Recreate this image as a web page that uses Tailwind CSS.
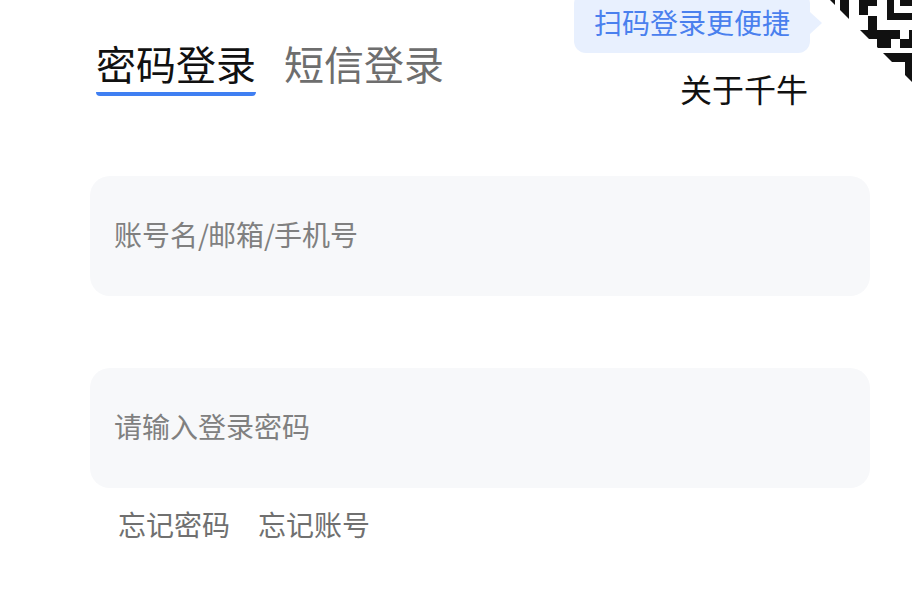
<!DOCTYPE html>
<html lang="zh">
<head>
    <meta charset="UTF-8">
    <title>登录</title>
    <script src="https://cdn.jsdelivr.net/npm/@tailwindcss/browser@4"></script>
</head>
<body class="bg-white">
    <div class="relative w-[912px] h-[600px] overflow-hidden bg-white font-['Noto_Sans_CJK_SC',sans-serif]">
        <!-- 二维码角标 -->
        <svg class="absolute top-0 right-0" width="90" height="90" viewBox="822 0 90 90">
            <defs>
                <clipPath id="corner">
                    <polygon points="830,0 912,0 912,82" />
                </clipPath>
            </defs>
            <g fill="#111" clip-path="url(#corner)">
                <rect x="826" y="0" width="9" height="6" />
                <rect x="840" y="0" width="9" height="20" />
                <rect x="859" y="0" width="18" height="6" />
                <rect x="859" y="6" width="9" height="9" />
                <rect x="887" y="0" width="7" height="20" />
                <rect x="894" y="13" width="18" height="7" />
                <rect x="900" y="0" width="12" height="6" />
                <rect x="868" y="16" width="9" height="14" />
                <rect x="855" y="30" width="45" height="9" />
                <rect x="877" y="39" width="14" height="9" />
                <rect x="909" y="30" width="3" height="9" />
                <rect x="900" y="39" width="12" height="9" />
                <rect x="880" y="53" width="32" height="9" />
                <rect x="905" y="62" width="7" height="24" />
            </g>
        </svg>

        <!-- 气泡 -->
        <div class="absolute left-[574px] top-[-8px] flex items-center h-[61px] px-5 pb-[2px] rounded-xl bg-[#e8f0fe] text-[28px] leading-none text-[#4a80ee]">
            扫码登录更便捷
            <span class="absolute right-[-12px] top-[20px] w-0 h-0 border-y-[11px] border-y-transparent border-l-[12px] border-l-[#e8f0fe]"></span>
        </div>

        <div class="absolute left-[680px] top-[69px] text-[32px] leading-[38px] text-[#111]">关于千牛</div>

        <!-- 登录方式 -->
        <div class="flex gap-7 pl-24 pt-[36px]">
            <div class="text-[40px] leading-[54px] pb-[2px] text-[#111] border-b-4 border-[#3f7ff2] rounded-b-sm">密码登录</div>
            <div class="text-[40px] leading-[54px] text-[#6e6e6e]">短信登录</div>
        </div>

        <!-- 表单 -->
        <div class="flex flex-col gap-[72px] ml-[90px] mt-[80px] w-[780px]">
            <div class="flex items-center h-[120px] pl-6 pb-1 rounded-[20px] bg-[#f7f8fa] text-[28px] text-[#808080]">
                <span>账号名<span class="tracking-[-1px]">/</span>邮箱<span class="tracking-[-1px]">/</span>手机号</span>
            </div>
            <div class="flex items-center h-[120px] pl-6 pb-1 rounded-[20px] bg-[#f7f8fa] text-[28px] text-[#808080]">请输入登录密码</div>
        </div>

        <div class="flex gap-7 pl-[118px] pt-[18px] text-[28px] leading-[36px] text-[#707070]">
            <span>忘记密码</span>
            <span>忘记账号</span>
        </div>
    </div>
</body>
</html>
